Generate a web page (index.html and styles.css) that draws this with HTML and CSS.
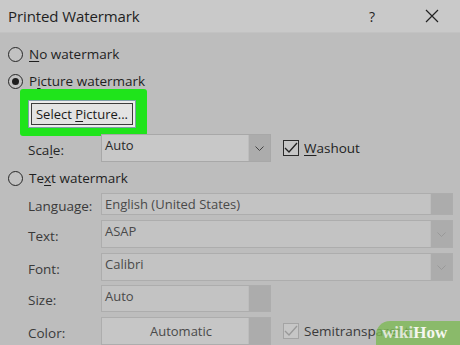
FILE: index.html
```html
<!DOCTYPE html>
<html>
<head>
<meta charset="utf-8">
<link rel="stylesheet" href="styles.css">
</head>
<body>
<div class="dialog">
  <div class="titlebar">
    <span class="title">Printed Watermark</span>
    <span class="help">?</span>
    <svg class="close" width="14" height="14" viewBox="0 0 14 14"><path d="M1 1L13 13M13 1L1 13" stroke="#222" stroke-width="1.2" fill="none"/></svg>
  </div>

  <div class="radio-row r1"><span class="radio"></span><span class="rlabel"><u>N</u>o watermark</span></div>
  <div class="radio-row r2"><span class="radio on"></span><span class="rlabel">P<u>i</u>cture watermark</span></div>

  <div class="highlight">
    <div class="btn"><span>Select <u>P</u>icture...</span></div>
  </div>

  <div class="frow scale">
    <span class="flabel dark">Sca<u>l</u>e:</span>
    <div class="combo narrow enabled"><span class="ctext">Auto</span><span class="drop"><svg width="9" height="5" viewBox="0 0 9 5"><path d="M0.5 0.5L4.5 4.5L8.5 0.5" stroke="#444" fill="none"/></svg></span></div>
    <span class="check on"><svg width="14" height="12" viewBox="0 0 14 12"><path d="M1 6L5 10L13 1" stroke="#222" stroke-width="1.3" fill="none"/></svg></span>
    <span class="clabel"><u>W</u>ashout</span>
  </div>

  <div class="radio-row r3"><span class="radio"></span><span class="rlabel">Te<u>x</u>t watermark</span></div>

  <div class="frow lang">
    <span class="flabel">Language:</span>
    <div class="combo wide"><span class="ctext">English (United States)</span><span class="drop"></span></div>
  </div>
  <div class="frow text">
    <span class="flabel">Text:</span>
    <div class="combo wide"><span class="ctext">ASAP</span><span class="drop"><svg width="9" height="5" viewBox="0 0 9 5"><path d="M0.5 0.5L4.5 4.5L8.5 0.5" stroke="#999" fill="none"/></svg></span></div>
  </div>
  <div class="frow font">
    <span class="flabel">Font:</span>
    <div class="combo wide"><span class="ctext">Calibri</span><span class="drop"><svg width="9" height="5" viewBox="0 0 9 5"><path d="M0.5 0.5L4.5 4.5L8.5 0.5" stroke="#999" fill="none"/></svg></span></div>
  </div>
  <div class="frow size">
    <span class="flabel">Size:</span>
    <div class="combo narrow"><span class="ctext">Auto</span><span class="drop"></span></div>
  </div>
  <div class="frow color">
    <span class="flabel">Color:</span>
    <div class="combo narrow colorbox"><span class="ctext center">Automatic</span><span class="drop"></span></div>
    <span class="check dim"><svg width="14" height="12" viewBox="0 0 14 12"><path d="M1 6L5 10L13 1" stroke="#999" stroke-width="1.3" fill="none"/></svg></span>
    <span class="clabel grey">Semitransparent</span>
  </div>
</div>
<div class="wikihow"><span class="wiki">wiki</span><span class="how">How</span></div>
</body>
</html>
```
FILE: styles.css
```css
html, body {
  margin: 0;
  padding: 0;
}
body {
  width: 460px;
  height: 345px;
  overflow: hidden;
  background: #bdbdbd;
  font-family: "Open Sans", "Noto Sans", sans-serif;
  color: #1f1f1f;
  position: relative;
}
u { text-decoration-thickness: 1px; text-underline-offset: 2px; }

.dialog {
  display: flex;
  flex-direction: column;
}
.titlebar {
  height: 33px;
  background: #c9c9c9;
  border-bottom: 1px solid #c2c2c2;
  box-sizing: border-box;
  display: flex;
  align-items: center;
  padding-left: 8px;
}
.title {
  font-size: 15px;
  flex: 1;
  letter-spacing: -0.1px;
}
.help {
  font-size: 14px;
  margin-right: 50px;
}
.close {
  margin-right: 21px;
}

.radio-row {
  height: 18px;
  display: flex;
  align-items: center;
  padding-left: 8px;
  font-size: 13.5px;
}
.r1 { margin-top: 12px; }
.r2 { margin-top: 9px; }
.r3 { margin-top: 7px; }
.radio {
  width: 13px;
  height: 13px;
  border: 1px solid #262626;
  border-radius: 50%;
  background: #c2c2c2;
  position: relative;
  flex: none;
}
.radio.on::after {
  content: "";
  position: absolute;
  left: 3px;
  top: 3px;
  width: 7px;
  height: 7px;
  border-radius: 50%;
  background: #1e1e1e;
}
.rlabel {
  margin-left: 6px;
}

.highlight {
  margin-left: 20px;
  margin-top: -1px;
  width: 127px;
  height: 47px;
  box-sizing: border-box;
  background: #1fe41b;
  border-radius: 3px;
  padding: 11px 0 0 8px;
}
.btn {
  width: 108px;
  height: 28px;
  box-sizing: border-box;
  background: #e3e3e3;
  border: 1px solid #7f9ea8;
  box-shadow: inset 0 0 0 2px #ececec, inset 0 0 0 3px #3c3c3c;
  font-size: 13px;
  display: flex;
  align-items: center;
  justify-content: center;
  color: #1a1a1a;
}

.frow {
  display: flex;
  align-items: flex-start;
  padding-left: 28px;
  font-size: 13.5px;
}
.scale { margin-top: -2px; height: 28px; }
.lang { margin-top: 6px; height: 22px; }
.text { margin-top: 5px; height: 28px; }
.font { margin-top: 5px; height: 28px; }
.size { margin-top: 4px; height: 27px; }
.color { margin-top: 5px; height: 28px; }

.flabel {
  width: 73px;
  flex: none;
  align-self: center;
  color: #3a3a3a;
  padding-top: 3px;
}
.flabel.dark { color: #262626; }

.combo {
  height: 100%;
  box-sizing: border-box;
  border: 1px solid #adadad;
  background: #c3c3c3;
  display: flex;
  flex: none;
}
.combo.enabled { background: #c8c8c8; border-color: #a8a8a8; }
.combo.wide { width: 352px; }
.combo.narrow { width: 170px; }
.ctext {
  flex: 1;
  padding-left: 3px;
  line-height: 20px;
  color: #4a4a4a;
  font-size: 13px;
}
.enabled .ctext { color: #2a2a2a; }
.ctext.center {
  text-align: center;
  align-self: center;
  padding-left: 12px;
}
.drop {
  width: 21px;
  background: #acacac;
  border-left: 1px solid #bdbdbd;
  display: flex;
  align-items: center;
  justify-content: center;
}
.colorbox { background: #c6c6c6; }

.check {
  width: 16px;
  height: 16px;
  box-sizing: border-box;
  border: 1px solid #2a2a2a;
  margin-left: 12px;
  align-self: center;
  display: flex;
  align-items: center;
  justify-content: center;
  background: #c6c6c6;
}
.check.dim { border-color: #a4a4a4; }
.clabel {
  margin-left: 5px;
  align-self: center;
  color: #222;
  white-space: nowrap;
}
.clabel.grey { color: #3a3a3a; }

.wikihow {
  position: absolute;
  z-index: 2;
  right: 0;
  bottom: 0;
  width: 84px;
  height: 24px;
  background: rgba(125, 185, 85, 0.8);
  border-top-left-radius: 14px;
  font-family: "Liberation Serif", serif;
  font-weight: bold;
  font-size: 17px;
  display: flex;
  align-items: center;
  padding-left: 6px;
  box-sizing: border-box;
}
.wiki { color: #dfe6d6; }
.how { color: #f4f7ef; }
```
